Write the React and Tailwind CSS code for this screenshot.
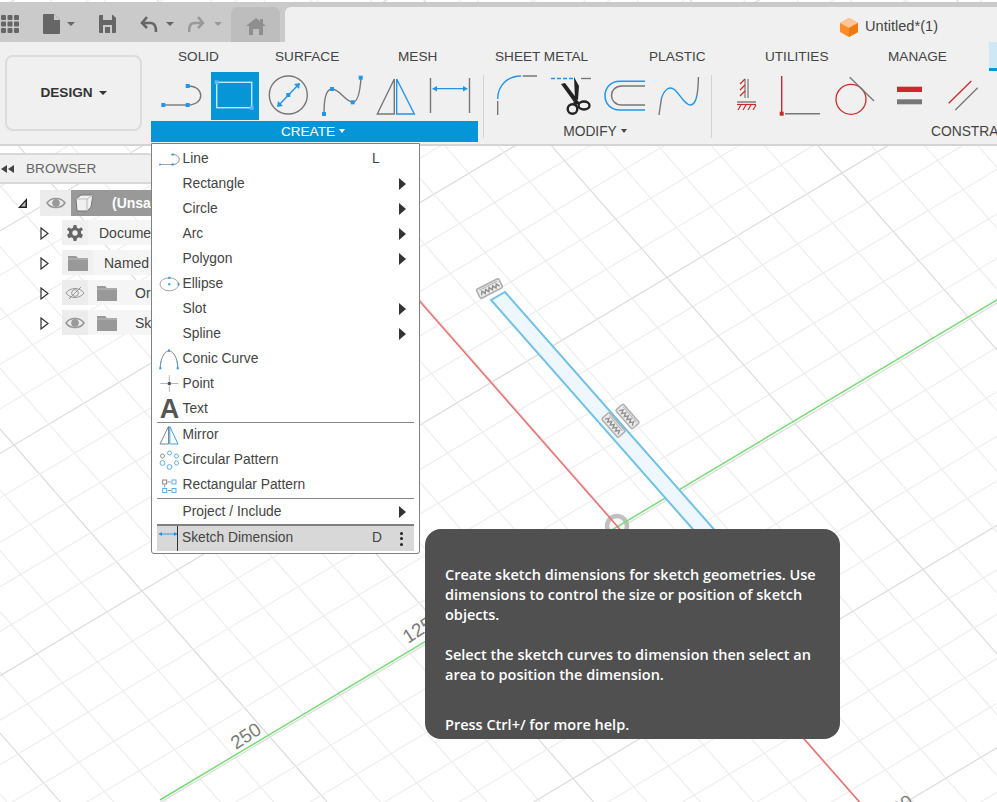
import React from 'react';

const BLUE = '#2196e8';
const GREY = '#777777';
const RED = '#cc2a2a';

const Ico = ({ x = 0, y = 0, w, h, className = '', children }) => (
  <svg width={w} height={h} viewBox={`${x} ${y} ${w} ${h}`} className={`shrink-0 ${className}`}>
    {children}
  </svg>
);

const Dot = ({ x, y, s = 4, fill = BLUE }) => <rect x={x - s / 2} y={y - s / 2} width={s} height={s} fill={fill} />;

const Caret = ({ color = '#444444', w = 8, h = 4, className = '' }) => (
  <svg width={w} height={h} viewBox="0 0 8 4" preserveAspectRatio="none" className={`shrink-0 ${className}`}>
    <path d="M0 0H8L4 4Z" fill={color} />
  </svg>
);

const Canvas = () => {
  const o = { x: 620, y: 528 };
  const u = { x: 35, y: -20.9 };
  const v = { x: 25.6, y: 29.2 };
  const lines = [];
  for (let i = -40; i <= 40; i++) {
    const major = i % 5 === 0;
    const stroke = major ? '#dcdcdc' : '#eeeeee';
    const sx = o.x + i * u.x;
    const sy = o.y + i * u.y;
    lines.push(<line key={`a${i}`} x1={sx - v.x * 40} y1={sy - v.y * 40} x2={sx + v.x * 40} y2={sy + v.y * 40} stroke={stroke} strokeWidth="1.2" />);
    const tx = o.x + i * v.x;
    const ty = o.y + i * v.y;
    lines.push(<line key={`b${i}`} x1={tx - u.x * 40} y1={ty - u.y * 40} x2={tx + u.x * 40} y2={ty + u.y * 40} stroke={stroke} strokeWidth="1.2" />);
  }
  const chip = (cx, cy, deg, key) => (
    <g key={key} transform={`translate(${cx} ${cy}) rotate(${deg})`}>
      <rect x="-12.5" y="-5" width="25" height="10" rx="1.5" fill="#ececec" stroke="#b0b0b0" strokeWidth="1.6" />
      <path d="M-10 2.5 L-8 -1 L-6 2.5 L-4 -1 L-2 2.5 L0 -1 L2 2.5 L4 -1 L6 2.5 L8 -1 L10 2.5" fill="none" stroke="#8f8f8f" strokeWidth="1.4" />
      <line x1="-10" y1="-3" x2="10" y2="-3" stroke="#b5b5b5" strokeWidth="1" />
    </g>
  );
  return (
    <svg className="absolute inset-0" width="997" height="802" viewBox="0 0 997 802">
      {lines}
      <circle cx="617" cy="526" r="10" fill="#f6f6f6" stroke="#c0c0c0" strokeWidth="4.5" />
      <line x1="160" y1="800" x2="1000" y2="298" stroke="#77dc77" strokeWidth="1.5" />
      <line x1="300" y1="165" x2="862" y2="805" stroke="#ec6f6f" strokeWidth="1.5" />
      <polygon points="491,300 505,292 741,560 720,560" fill="#eef7fd" stroke="#70c0e8" strokeWidth="2" />
      {chip(489.5, 288.5, -27, 'c1')}
      {chip(627.5, 416.5, 49, 'c2')}
      {chip(613.5, 425, 49, 'c3')}
      <g fontFamily="'Liberation Sans', sans-serif" fontSize="19" fill="#7c7c7c">
        <text transform="translate(408 644) rotate(-33)">125</text>
        <text transform="translate(236 750) rotate(-33)">250</text>
        <text transform="translate(888 822) rotate(-33)">500</text>
      </g>
    </svg>
  );
};

const TopBar = () => (
  <div className="flex h-[40px] items-end bg-[#cacaca]">
    <div className="flex h-[40px] w-[231px] items-center">
      <Ico x={0} y={12} w={21} h={20} className="mt-[4px]">
        {[13, 19.5, 26].map((y) =>
          [1, 7.5, 14].map((x) => <rect key={`${x}-${y}`} x={x} y={y} width="5" height="5" rx="1" fill="#666666" />)
        )}
      </Ico>
      <Ico x={42} y={11} w={20} h={22} className="ml-[21px] mt-[4px]">
        <path d="M44 12H54L60 18V31A1 1 0 0 1 59 32H44A1 1 0 0 1 43 31V13A1 1 0 0 1 44 12Z" fill="#666666" />
        <path d="M54 12V18H60" fill="#cacaca" />
      </Ico>
      <div className="ml-[5px] mt-[4px]"><Caret color="#666666" /></div>
      <Ico x={98} y={12} w={20} h={20} className="ml-[23px] mt-[4px]">
        <path d="M100 13H113L116 16V30A1 1 0 0 1 115 31H100A1 1 0 0 1 99 30V14A1 1 0 0 1 100 13Z" fill="#666666" />
        <rect x="103" y="13" width="9" height="5" fill="#cacaca" />
        <rect x="103" y="23" width="9" height="8" fill="#cacaca" />
        <rect x="105" y="25" width="5" height="6" fill="#666666" />
      </Ico>
      <Ico x={140} y={13} w={19} h={19} className="ml-[22px] mt-[4px]">
        <path d="M147 15L142 21L147 26" fill="none" stroke="#666666" strokeWidth="2.6" />
        <path d="M143 21H151C155 21 156 25 156 30" fill="none" stroke="#666666" strokeWidth="2.6" />
      </Ico>
      <div className="ml-[7px] mt-[4px]"><Caret color="#666666" /></div>
      <Ico x={188} y={13} w={19} h={19} className="ml-[14px] mt-[4px]">
        <path d="M198 15L203 21L198 26" fill="none" stroke="#999999" strokeWidth="2.6" />
        <path d="M202 21H194C190 21 189 25 189 30" fill="none" stroke="#999999" strokeWidth="2.6" />
      </Ico>
      <div className="ml-[7px] mt-[4px]"><Caret color="#999999" /></div>
    </div>
    <div className="flex h-[35px] w-[49px] items-center justify-center rounded-t-md bg-[#bdbdbd]">
      <Ico x={247} y={17} w={22} h={19} className="mt-[3px]">
        <path d="M258 18L262 21.2V19H265V23.6L268 26H265V35H261V29H255V35H251V26H248Z" fill="#8e8e8e" />
      </Ico>
    </div>
    <div className="ml-[5px] flex h-[35px] flex-1 items-center rounded-tl-md bg-[#f0f0f0] pl-[554px] pt-[4px]">
      <Ico x={839} y={16} w={20} h={20}>
        <path d="M849 17L858 22V31L849 36L840 31V22Z" fill="#ff8c26" />
        <path d="M849 17L858 22L849 27L840 22Z" fill="#ffc595" />
        <path d="M849 27L858 22V31L849 36Z" fill="#f07a10" />
      </Ico>
      <span className="ml-[6px] text-[14.6px] text-[#444444]">Untitled*(1)</span>
    </div>
  </div>
);

const tabs = [
  ['SOLID', 'w-[97px]'],
  ['SURFACE', 'w-[123px]'],
  ['MESH', 'w-[97px]'],
  ['SHEET METAL', 'w-[154px]'],
  ['PLASTIC', 'w-[116px]'],
  ['UTILITIES', 'w-[123px]'],
  ['MANAGE', 'w-[101px]'],
];

const CreateIcons = () => (
  <div className="flex h-[48px] pl-[3px]">
    <Ico x={154} y={72} w={54} h={48}>
      <path d="M164 105H187" stroke={GREY} strokeWidth="1.4" />
      <path d="M188 86C205 86 205 105 188 105" fill="none" stroke={GREY} strokeWidth="1.4" />
      <Dot x={163.3} y={105} /><Dot x={187.7} y={105} /><Dot x={187.7} y={86} />
    </Ico>
    <Ico x={208} y={72} w={54} h={48}>
      <rect x="211" y="72" width="48" height="48" fill="#0696d7" />
      <rect x="216.7" y="82.3" width="35" height="25.4" fill="none" stroke="#c9e6f6" strokeWidth="1.4" />
      <Dot x={216.7} y={82.3} fill="#5db9f0" /><Dot x={251.7} y={107.7} fill="#5db9f0" />
    </Ico>
    <Ico x={262} y={72} w={54} h={48}>
      <circle cx="288.3" cy="95" r="19" fill="none" stroke={GREY} strokeWidth="1.4" />
      <path d="M278 106L299 84" stroke={BLUE} strokeWidth="1.4" />
      <path d="M277 107L278 101L283 106ZM300 83L299 89L294 84Z" fill={BLUE} />
      <Dot x={288.3} y={95} />
    </Ico>
    <Ico x={316} y={72} w={54} h={48}>
      <path d="M324 113C324 100 326 89 332 89C340 89 345 102 353 102C358 102 360 92 361 78" fill="none" stroke={GREY} strokeWidth="1.4" />
      <Dot x={324} y={114} /><Dot x={332} y={89} /><Dot x={352.7} y={102.3} /><Dot x={360.7} y={77.7} />
    </Ico>
    <Ico x={370} y={72} w={54} h={48}>
      <path d="M394.3 79V114H377.3Z" fill="none" stroke={GREY} strokeWidth="1.4" />
      <path d="M396.7 79V114H414.3Z" fill="none" stroke={BLUE} strokeWidth="1.4" />
    </Ico>
    <Ico x={424} y={72} w={54} h={48}>
      <path d="M430.5 78V113M469.5 78V113" stroke={GREY} strokeWidth="1.4" />
      <path d="M433 88.7H467" stroke={BLUE} strokeWidth="1.3" />
      <path d="M432 88.7L437 86V91.4ZM468 88.7L463 86V91.4Z" fill={BLUE} />
    </Ico>
  </div>
);

const ModifyIcons = () => (
  <div className="flex h-[48px]">
    <Ico x={493} y={72} w={48} h={48} className="ml-[9px]">
      <path d="M497.7 101V115M522.7 76H537" stroke={GREY} strokeWidth="1.4" />
      <path d="M497.7 99C497.7 85 508 76 521 76" fill="none" stroke={BLUE} strokeWidth="1.4" />
    </Ico>
    <Ico x={551} y={72} w={48} h={48} className="ml-[10px]">
      <path d="M551 78.5H573" stroke={BLUE} strokeWidth="1.4" strokeDasharray="4 2" />
      <path d="M581 78.5H591" stroke={GREY} strokeWidth="1.4" />
      <path d="M561 84L565 83L577 99L574 102ZM574 77L579 86L578 100L575 99Z" fill="#222222" />
      <circle cx="572.5" cy="109" r="4.8" fill="none" stroke="#222222" strokeWidth="2.4" />
      <ellipse cx="584" cy="105.5" rx="5.5" ry="4" fill="none" stroke="#222222" strokeWidth="2.4" />
      <path d="M573 103L576 99L580 103L576 105Z" fill="#222222" />
    </Ico>
    <Ico x={601} y={72} w={48} h={48} className="ml-[2px]">
      <path d="M645 81.3H620C600 81.3 600 110 620 110H645" fill="none" stroke={BLUE} strokeWidth="1.5" />
      <path d="M645 86H622C608 86 608 105 622 105H645" fill="none" stroke={GREY} strokeWidth="1.5" />
    </Ico>
    <Ico x={654} y={72} w={48} h={48} className="ml-[5px]">
      <path d="M659 115L661.5 98" fill="none" stroke={GREY} strokeWidth="1.4" />
      <path d="M661.5 98C665 88 670 86 675 90C681 96 686 106 691 105C695 104 696 100 696.8 96" fill="none" stroke={BLUE} strokeWidth="1.4" />
      <path d="M696.8 96C698 90 698.3 84 698.4 77" fill="none" stroke={GREY} strokeWidth="1.4" />
    </Ico>
  </div>
);

const ConstrainIcons = () => (
  <div className="flex h-[48px] pl-[8px]">
    <Ico x={720} y={72} w={54} h={48}>
      <path d="M745 79V98M748 79V98" stroke={GREY} strokeWidth="1.2" />
      <path d="M745 79L740 84M745 85L740 90M745 91L740 96" stroke={RED} strokeWidth="1.2" />
      <path d="M737 102H756" stroke={GREY} strokeWidth="1.4" />
      <path d="M737 104.5H756" stroke={RED} strokeWidth="1.2" />
      <path d="M741 105L738 110M746 105L743 110M751 105L748 110M756 105L753 110" stroke={RED} strokeWidth="1.2" />
    </Ico>
    <Ico x={774} y={72} w={54} h={48}>
      <path d="M781.7 76V112" stroke={RED} strokeWidth="1.4" />
      <Dot x={781.7} y={113.7} fill={RED} />
      <path d="M785 113.7H820" stroke={GREY} strokeWidth="1.4" />
    </Ico>
    <Ico x={826} y={72} w={54} h={48}>
      <circle cx="849" cy="99.3" r="15" fill="none" stroke={RED} strokeWidth="1.3" />
      <path d="M847.7 77.3L872 101" stroke={GREY} strokeWidth="1.4" />
    </Ico>
    <Ico x={880} y={72} w={54} h={48}>
      <rect x="895" y="86.7" width="25" height="5.3" fill={RED} />
      <rect x="895" y="99.3" width="25" height="5" fill={GREY} />
    </Ico>
    <Ico x={934} y={72} w={54} h={48}>
      <path d="M946.7 103.3L969.3 81" stroke={RED} strokeWidth="1.3" />
      <path d="M953.3 110L975.7 87.7" stroke={GREY} strokeWidth="1.3" />
    </Ico>
  </div>
);

const Ribbon = () => (
  <div className="flex h-[104px] border-b-2 border-[#d4d4d4] bg-[#f0f0f0]">
    <div className="w-[151px] pl-[5px] pt-[13px]">
      <div className="flex h-[76px] w-[137px] items-center justify-center gap-[6px] rounded-lg border-2 border-[#dcdcdc] text-[13.6px] font-bold text-[#333333]">
        DESIGN <Caret color="#333333" />
      </div>
    </div>
    <div className="flex flex-1 flex-col overflow-hidden">
      <div className="flex h-[30px] pl-[27px] text-[13.6px] text-[#444444]">
        {tabs.map(([name, width]) => (
          <div key={name} className={`${width} shrink-0 pt-[5px]`}>{name}</div>
        ))}
        <div className="h-[29px] w-[20px] shrink-0 border-b-[3px] border-[#0696d7] bg-[#cfe8f6]" />
      </div>
      <div className="flex">
        <div className="w-[327px] shrink-0">
          <CreateIcons />
          <div className="mt-[1px] flex h-[21px] items-center justify-center gap-[4px] bg-[#0696d7] pr-[3px] pt-[1px] text-[13.6px] text-white">
            CREATE <Caret color="#ffffff" w={6} h={4} className="mb-[3px]" />
          </div>
        </div>
        <div className="ml-[5px] mt-[3px] h-[63px] w-px shrink-0 bg-[#d2d2d2]" />
        <div className="w-[227px] shrink-0">
          <ModifyIcons />
          <div className="mt-[1px] flex h-[21px] items-center justify-center gap-[4px] pr-[5px] pt-[1px] text-[13.8px] text-[#444444]">
            MODIFY <Caret w={6} h={4} className="mb-[3px]" />
          </div>
        </div>
        <div className="mt-[3px] h-[63px] w-px shrink-0 bg-[#d2d2d2]" />
        <div className="flex-1">
          <ConstrainIcons />
          <div className="mt-[1px] flex h-[21px] items-center whitespace-nowrap pl-[219px] pt-[1px] text-[13.8px] text-[#444444]">CONSTRAINTS</div>
        </div>
      </div>
    </div>
  </div>
);

const Expand = () => (
  <svg width="9" height="13" viewBox="0 0 9 13" className="mt-[2px] shrink-0">
    <path d="M1 1L8 6.5L1 12Z" fill="#ffffff" stroke="#333333" strokeWidth="1.2" />
  </svg>
);

const Eye = ({ off }) => (
  <svg width="20" height="14" viewBox="0 0 20 14" className="shrink-0">
    <path d="M1 7C5 1 15 1 19 7C15 13 5 13 1 7Z" fill={off ? 'none' : '#ececec'} stroke="#999999" strokeWidth={off ? 1 : 1.6} />
    <circle cx="10" cy="7" r="3.4" fill={off ? 'none' : '#999999'} stroke="#999999" strokeWidth="1" />
    {off && <path d="M4 13L16 1" stroke="#999999" strokeWidth="1" />}
  </svg>
);

const Folder = () => (
  <svg width="20" height="16" viewBox="0 0 20 16" className="shrink-0">
    <path d="M0 1H8L10 3H20V16H0Z" fill="#999999" />
    <path d="M0 4H20" stroke="#c6c6c6" strokeWidth="0.8" />
  </svg>
);

const Browser = () => (
  <div className="absolute left-0 top-[153px] w-[152px] text-[#444444]">
    <div className="flex h-[31px] items-center rounded-tr-sm border-y-2 border-[#d8d8d8] bg-[#f0f0f0] text-[13.6px] text-[#666666]">
      <svg width="14" height="8" viewBox="0 0 14 8" className="ml-[1px]">
        <path d="M6 0V8L0 4ZM13 0V8L7 4Z" fill="#444444" />
      </svg>
      <span className="ml-[11px] mt-[2px]">BROWSER</span>
    </div>
    <div className="mt-[6px] flex h-[26px] items-center">
      <svg width="10" height="10" viewBox="0 0 10 10" className="ml-[18px]">
        <path d="M0 10L9 0V10Z" fill="#222222" />
        <path d="M3 8.5L7.5 3.5V8.5Z" fill="#bbbbbb" />
      </svg>
      <div className="ml-[12px] flex h-full w-[31px] items-center justify-center bg-[#ececec]"><Eye /></div>
      <div className="flex h-full flex-1 items-center overflow-hidden whitespace-nowrap bg-[#999999] text-[14px] font-bold text-white">
        <svg width="20" height="20" viewBox="0 0 20 20" className="ml-[4px] shrink-0">
          <path d="M1 6L6 2H18L16 14L12 18H2Z" fill="#f0f0f0" stroke="#777777" />
          <path d="M12 6H1M12 6L18 2M12 6V18" fill="none" stroke="#bbbbbb" />
        </svg>
        <span className="ml-[17px]">(Unsaved)</span>
      </div>
    </div>
    <div className="mt-[4px] flex h-[25px] items-center">
      <div className="ml-[40px]"><Expand /></div>
      <div className="ml-[13px] flex h-full w-[26px] items-center justify-center bg-[#f0f0f0]">
        <svg width="16" height="16" viewBox="0 0 24 24">
          <path d="M10 0H14L15 4L18 5.5L21.5 3.5L24 7L21 9.5V12.5L24 15L21.5 20L18 18.5L15 20L14 24H10L9 20L6 18.5L2.5 20L0 15L3 12.5V9.5L0 7L2.5 3.5L6 5.5L9 4Z M12 8A4 4 0 1 0 12 16A4 4 0 1 0 12 8Z" fill="#666666" fillRule="evenodd" />
        </svg>
      </div>
      <div className="flex h-full flex-1 items-center overflow-hidden whitespace-nowrap bg-[#f5f5f5] pl-[11px] pt-[2px] text-[14px]">Document Settings</div>
    </div>
    <div className="mt-[5px] flex h-[25px] items-center">
      <div className="ml-[40px]"><Expand /></div>
      <div className="ml-[13px] flex h-full w-[31px] items-center justify-center bg-[#f0f0f0]"><Folder /></div>
      <div className="flex h-full flex-1 items-center overflow-hidden whitespace-nowrap bg-[#f5f5f5] pl-[11px] pt-[2px] text-[14px]">Named Views</div>
    </div>
    <div className="mt-[5px] flex h-[25px] items-center">
      <div className="ml-[40px]"><Expand /></div>
      <div className="ml-[13px] flex h-full w-[26px] items-center justify-center bg-[#ececec]"><Eye off /></div>
      <div className="flex h-full flex-1 items-center overflow-hidden whitespace-nowrap bg-[#f5f5f5] pl-[9px] text-[14px]">
        <Folder /><span className="ml-[18px] mt-[2px]">Origin</span>
      </div>
    </div>
    <div className="mt-[5px] flex h-[25px] items-center">
      <div className="ml-[40px]"><Expand /></div>
      <div className="ml-[13px] flex h-full w-[26px] items-center justify-center bg-[#ececec]"><Eye /></div>
      <div className="flex h-full flex-1 items-center overflow-hidden whitespace-nowrap bg-[#f5f5f5] pl-[9px] text-[14px]">
        <Folder /><span className="ml-[18px] mt-[2px]">Sketches</span>
      </div>
    </div>
  </div>
);

const smallIcon = (children) => (
  <svg width="24" height="25" viewBox="0 0 24 25" className="shrink-0">{children}</svg>
);

const icons = {
  line: smallIcon(
    <>
      <path d="M3 17.5H15.5" stroke="#999999" strokeWidth="0.9" />
      <path d="M15.5 7.5C24.5 7.5 24.5 17.5 15.5 17.5" fill="none" stroke="#777777" strokeWidth="0.9" />
      <Dot x={3} y={17.5} s={1.6} /><Dot x={15.5} y={17.5} s={2} /><Dot x={15.5} y={7.5} s={2} />
    </>
  ),
  ellipse: smallIcon(
    <>
      <ellipse cx="12.3" cy="12.3" rx="9.3" ry="6.5" fill="none" stroke="#999999" strokeWidth="0.9" />
      <Dot x={12.3} y={12.3} s={2} /><Dot x={12.3} y={5.8} s={2} /><Dot x={21.6} y={12.3} s={2} />
    </>
  ),
  conic: smallIcon(
    <>
      <path d="M3.3 21C3.3 12 7 4 12 4C17 4 20.7 12 20.7 21" fill="none" stroke="#777777" strokeWidth="0.9" />
      <path d="M3.3 21C3.3 18 3.6 16 4 14M20.7 21C20.7 18 20.4 16 20 14" fill="none" stroke="#4fa6e8" strokeWidth="0.9" />
      <Dot x={12} y={3.5} s={2} /><Dot x={3.3} y={21.3} s={2} /><Dot x={20.7} y={21.3} s={2} />
    </>
  ),
  point: smallIcon(
    <>
      <path d="M3.3 11.5H21.3M12.3 3V20" stroke="#b0b0b0" strokeWidth="0.9" />
      <rect x="10.8" y="10" width="3" height="3" fill="#555555" />
    </>
  ),
  text: <span className="flex w-[24px] shrink-0 justify-center pl-[1px] text-[27px] font-bold leading-[25px] text-[#555555]">A</span>,
  mirror: smallIcon(
    <>
      <path d="M11.5 3.5V21H3Z" fill="none" stroke="#777777" strokeWidth="0.9" />
      <path d="M12.8 3.5V21H21Z" fill="none" stroke={BLUE} strokeWidth="0.9" />
    </>
  ),
  circular: smallIcon(
    <g fill="none" stroke="#4fa6e8" strokeWidth="0.9">
      <circle cx="12.5" cy="5" r="2" />
      <circle cx="19.5" cy="8" r="2" />
      <circle cx="19.5" cy="15" r="2" />
      <circle cx="12.5" cy="19" r="2.4" />
      <circle cx="5.5" cy="15" r="2.4" />
      <circle cx="5.5" cy="8" r="2" stroke="#888888" />
    </g>
  ),
  rectangular: smallIcon(
    <g fill="none" strokeWidth="0.9">
      <rect x="5.7" y="7" width="4" height="4" stroke="#777777" />
      <rect x="15" y="7" width="4" height="4" stroke="#4fa6e8" />
      <rect x="5.7" y="15.5" width="4" height="4" stroke="#4fa6e8" />
      <rect x="15" y="15.5" width="4" height="4" stroke="#4fa6e8" />
      <path d="M10.5 9H14M10.5 17.5H14M7.7 12V14.5" stroke="#888888" />
    </g>
  ),
  dimension: smallIcon(
    <>
      <path d="M2 8H20" stroke={BLUE} strokeWidth="0.9" />
      <path d="M1.5 8L5 6V10ZM20.5 8L17 6V10Z" fill={BLUE} />
    </>
  ),
};

const Arrow = () => (
  <svg width="7" height="12" viewBox="0 0 7 12" className="absolute left-[247px] top-[6px]">
    <path d="M0 0L7 6L0 12Z" fill="#333333" />
  </svg>
);

const MenuRow = ({ icon, label, shortcut, arrow }) => (
  <div className="relative flex h-[25px] items-center pl-[5px] text-[13.8px] text-[#444444]">
    <div className="flex w-[25.5px] shrink-0 items-center">{icon}</div>
    <span>{label}</span>
    {shortcut && <span className="absolute left-[220px]">{shortcut}</span>}
    {arrow && <Arrow />}
  </div>
);

const Menu = () => (
  <div className="absolute left-[151px] top-[143px] flex h-[411px] w-[269px] flex-col rounded-b-[3px] border border-[#808080] bg-white pt-[3px]">
    <MenuRow icon={icons.line} label="Line" shortcut="L" />
    <MenuRow label="Rectangle" arrow />
    <MenuRow label="Circle" arrow />
    <MenuRow label="Arc" arrow />
    <MenuRow label="Polygon" arrow />
    <MenuRow icon={icons.ellipse} label="Ellipse" />
    <MenuRow label="Slot" arrow />
    <MenuRow label="Spline" arrow />
    <MenuRow icon={icons.conic} label="Conic Curve" />
    <MenuRow icon={icons.point} label="Point" />
    <MenuRow icon={icons.text} label="Text" />
    <div className="mx-[5px] h-px bg-[#888888]" />
    <MenuRow icon={icons.mirror} label="Mirror" />
    <MenuRow icon={icons.circular} label="Circular Pattern" />
    <MenuRow icon={icons.rectangular} label="Rectangular Pattern" />
    <div className="mx-[5px] h-px bg-[#888888]" />
    <div className="-mb-[1px] mt-[1px]"><MenuRow label="Project / Include" arrow /></div>
    <div className="relative mx-[5px] flex h-[27px] items-center border-t-2 border-[#808080] bg-[#d8d8d8] text-[13.8px] text-[#444444]">
      <div className="flex w-[21px] shrink-0 items-center border-r border-[#333333]">
        <div className="h-[25px] w-[20px] overflow-hidden">{icons.dimension}</div>
      </div>
      <span className="ml-[4px]">Sketch Dimension</span>
      <span className="absolute left-[215px]">D</span>
      <div className="absolute left-[243px] flex flex-col gap-[2.5px]">
        <div className="h-[3px] w-[3px] rounded-full bg-[#222222]" />
        <div className="h-[3px] w-[3px] rounded-full bg-[#222222]" />
        <div className="h-[3px] w-[3px] rounded-full bg-[#222222]" />
      </div>
    </div>
  </div>
);

const Tooltip = () => (
  <div className="absolute left-[425px] top-[529px] h-[210px] w-[415px] rounded-2xl bg-[#505050] px-[20px] pt-[36px] font-['Open_Sans',sans-serif] text-[14.5px] font-semibold leading-[20px] text-white">
    <p>Create sketch dimensions for sketch geometries. Use dimensions to control the size or position of sketch objects.</p>
    <p className="mt-[20px]">Select the sketch curves to dimension then select an area to position the dimension.</p>
    <p className="mt-[30px]">Press Ctrl+/ for more help.</p>
  </div>
);

const App = () => {
  return (
    <div className="relative h-[802px] w-[997px] overflow-hidden bg-white font-['Liberation_Sans',sans-serif]">
      <Canvas />
      <div className="relative pt-[2px]">
        <TopBar />
        <Ribbon />
      </div>
      <Browser />
      <Menu />
      <Tooltip />
    </div>
  );
};

export default App;
